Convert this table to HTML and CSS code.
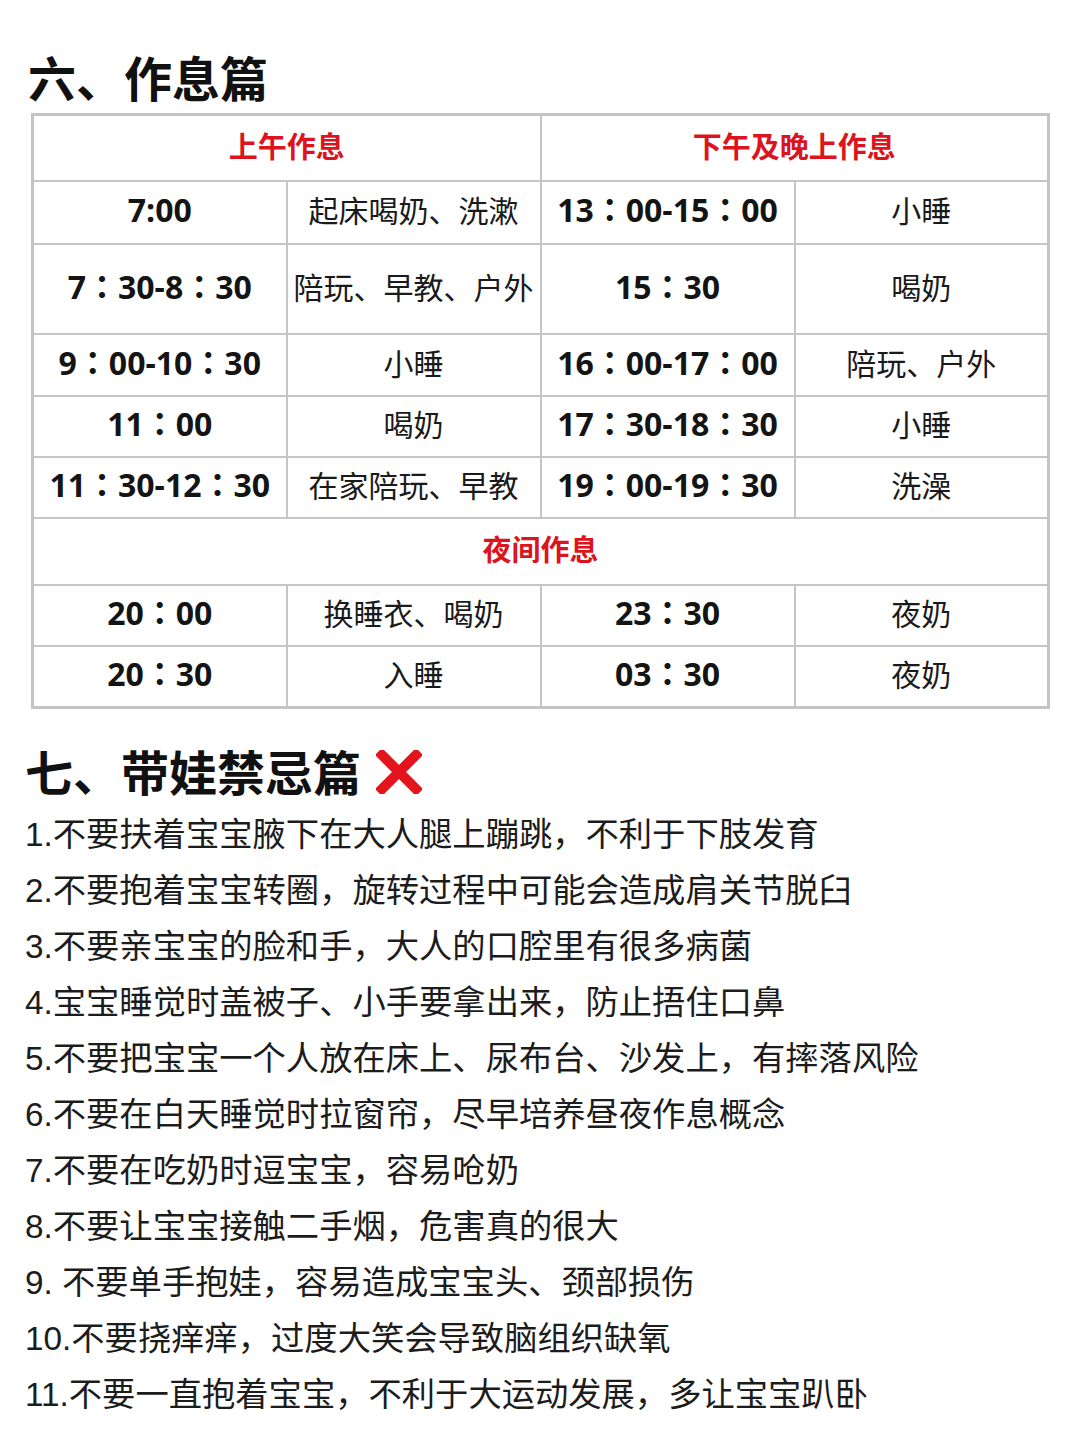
FILE: index.html
```html
<!DOCTYPE html>
<html lang="zh-CN">
<head>
<meta charset="utf-8">
<title>作息篇</title>
<link rel="stylesheet" href="styles.css">
</head>
<body>
<div class="page">
  <h1 class="title title-1">六、作息篇</h1>
  <table class="schedule">
    <colgroup><col><col><col><col></colgroup>
    <tr class="r-head">
      <th colspan="2">上午作息</th>
      <th colspan="2">下午及晚上作息</th>
    </tr>
    <tr class="r1">
      <td class="time">7:00</td><td>起床喝奶、洗漱</td>
      <td class="time">13：00-15：00</td><td>小睡</td>
    </tr>
    <tr class="r2">
      <td class="time">7：30-8：30</td><td>陪玩、早教、户外</td>
      <td class="time">15：30</td><td>喝奶</td>
    </tr>
    <tr class="r3">
      <td class="time">9：00-10：30</td><td>小睡</td>
      <td class="time">16：00-17：00</td><td>陪玩、户外</td>
    </tr>
    <tr class="r4">
      <td class="time">11：00</td><td>喝奶</td>
      <td class="time">17：30-18：30</td><td>小睡</td>
    </tr>
    <tr class="r5">
      <td class="time">11：30-12：30</td><td>在家陪玩、早教</td>
      <td class="time">19：00-19：30</td><td>洗澡</td>
    </tr>
    <tr class="r-night">
      <th colspan="4">夜间作息</th>
    </tr>
    <tr class="r6">
      <td class="time">20：00</td><td>换睡衣、喝奶</td>
      <td class="time">23：30</td><td>夜奶</td>
    </tr>
    <tr class="r7">
      <td class="time">20：30</td><td>入睡</td>
      <td class="time">03：30</td><td>夜奶</td>
    </tr>
  </table>

  <h2 class="title title-2">七、带娃禁忌篇<svg class="cross" width="46" height="44" viewBox="0 0 46 44" aria-hidden="true"><path d="M6 5 L40 39 M40 5 L6 39" stroke="#e3141c" stroke-width="10" stroke-linecap="square" fill="none"/></svg></h2>
  <ul class="rules">
    <li>1.不要扶着宝宝腋下在大人腿上蹦跳，不利于下肢发育</li>
    <li>2.不要抱着宝宝转圈，旋转过程中可能会造成肩关节脱臼</li>
    <li>3.不要亲宝宝的脸和手，大人的口腔里有很多病菌</li>
    <li>4.宝宝睡觉时盖被子、小手要拿出来，防止捂住口鼻</li>
    <li>5.不要把宝宝一个人放在床上、尿布台、沙发上，有摔落风险</li>
    <li>6.不要在白天睡觉时拉窗帘，尽早培养昼夜作息概念</li>
    <li>7.不要在吃奶时逗宝宝，容易呛奶</li>
    <li>8.不要让宝宝接触二手烟，危害真的很大</li>
    <li>9. 不要单手抱娃，容易造成宝宝头、颈部损伤</li>
    <li>10.不要挠痒痒，过度大笑会导致脑组织缺氧</li>
    <li>11.不要一直抱着宝宝，不利于大运动发展，多让宝宝趴卧</li>
  </ul>
</div>
</body>
</html>
```

FILE: styles.css
```css
html, body {
  margin: 0;
  padding: 0;
  background: #ffffff;
}

.page {
  width: 1080px;
  height: 1443px;
  overflow: hidden;
  font-family: "Liberation Sans", "Noto Sans CJK SC", sans-serif;
  color: #1a1a1a;
}

.title {
  margin: 0;
  font-family: "Noto Sans CJK SC", sans-serif;
  font-weight: 700;
  color: #111111;
  line-height: 60px;
  display: flex;
  align-items: center;
}

.title-1 {
  font-size: 48px;
  padding-left: 28px;
  margin-top: 46px;
  margin-bottom: 7px;
}

.title-2 {
  font-size: 48px;
  padding-left: 25px;
  margin-top: 31px;
  margin-bottom: 7px;
}

.cross {
  margin-left: 15px;
  margin-top: 4px;
}

.schedule {
  margin-left: 31px;
  width: 1019px;
  border-collapse: collapse;
  table-layout: fixed;
  border: 3px solid #c4c4c4;
}

.schedule col {
  width: 25%;
}

.schedule th,
.schedule td {
  border: 2px solid #c6c6c6;
  padding: 0 0 6px 0;
  text-align: center;
  vertical-align: middle;
  font-family: "Noto Sans CJK SC", sans-serif;
  font-size: 30px;
  font-weight: 400;
  line-height: 40px;
  color: #1a1a1a;
  white-space: nowrap;
}

.schedule th {
  color: #dc141d;
  font-weight: 700;
  font-size: 29px;
}

.schedule td.time {
  font-family: "Open Sans", "Noto Sans CJK TC", sans-serif;
  font-weight: 700;
  font-size: 32px;
  color: #141414;
  padding-bottom: 4px;
}

.r-head { height: 66px; }
.r1 { height: 63px; }
.r2 { height: 90px; }
.r3 { height: 62px; }
.r4 { height: 61px; }
.r5 { height: 61px; }
.r-night { height: 67px; }
.r6 { height: 61px; }
.r7 { height: 62px; }

.rules {
  list-style: none;
  margin: 0;
  padding: 0 0 0 25px;
  font-family: "Liberation Sans", "Noto Sans CJK SC", sans-serif;
  font-size: 33.3px;
  line-height: 56px;
  color: #1c1c1c;
}

.rules li {
  white-space: nowrap;
}
```
